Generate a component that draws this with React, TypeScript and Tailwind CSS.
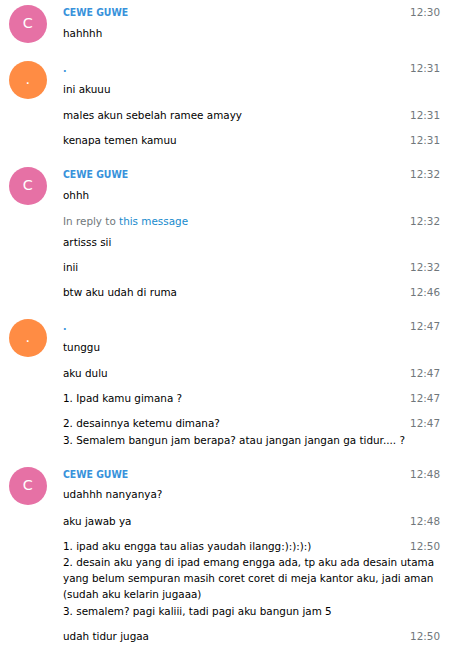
import React from 'react';

type Msg = { lines: string[]; time: string; reply?: boolean };
type Group = { name: string; initial: string; color: string; msgs: Msg[] };

const groups: Group[] = [
  {
    name: 'CEWE GUWE',
    initial: 'C',
    color: 'bg-[#e671a5]',
    msgs: [{ lines: ['hahhhh'], time: '12:30' }],
  },
  {
    name: '.',
    initial: '.',
    color: 'bg-[#ff8c44]',
    msgs: [
      { lines: ['ini akuuu'], time: '12:31' },
      { lines: ['males akun sebelah ramee amayy'], time: '12:31' },
      { lines: ['kenapa temen kamuu'], time: '12:31' },
    ],
  },
  {
    name: 'CEWE GUWE',
    initial: 'C',
    color: 'bg-[#e671a5]',
    msgs: [
      { lines: ['ohhh'], time: '12:32' },
      { lines: ['artisss sii'], time: '12:32', reply: true },
      { lines: ['inii'], time: '12:32' },
      { lines: ['btw aku udah di ruma'], time: '12:46' },
    ],
  },
  {
    name: '.',
    initial: '.',
    color: 'bg-[#ff8c44]',
    msgs: [
      { lines: ['tunggu'], time: '12:47' },
      { lines: ['aku dulu'], time: '12:47' },
      { lines: ['1. Ipad kamu gimana ?'], time: '12:47' },
      {
        lines: ['2. desainnya ketemu dimana?', '3. Semalem bangun jam berapa? atau jangan jangan ga tidur.... ?'],
        time: '12:47',
      },
    ],
  },
  {
    name: 'CEWE GUWE',
    initial: 'C',
    color: 'bg-[#e671a5]',
    msgs: [
      { lines: ['udahhh nanyanya?'], time: '12:48' },
      { lines: ['aku jawab ya'], time: '12:48' },
      {
        lines: [
          '1. ipad aku engga tau alias yaudah ilangg:):):):)',
          '2. desain aku yang di ipad emang engga ada, tp aku ada desain utama',
          'yang belum sempuran masih coret coret di meja kantor aku, jadi aman',
          '(sudah aku kelarin jugaaa)',
          '3. semalem? pagi kaliii, tadi pagi aku bangun jam 5',
        ],
        time: '12:50',
      },
      { lines: ['udah tidur jugaa'], time: '12:50' },
    ],
  },
];

const Message: React.FC<{ group: Group; msg: Msg; first: boolean }> = ({ group, msg, first }) => (
  <div className={`flex p-[9px] ${first ? '' : '-mt-[9px]'}`}>
    <div className="w-[54px] shrink-0">
      {first && (
        <div
          className={`size-[37.8px] rounded-full ${group.color} text-white text-center text-[14.4px] leading-[37.8px] select-none`}
        >
          {group.initial}
        </div>
      )}
    </div>
    <div className="flex-1 min-w-0 relative -top-[1px]">
      <div className="float-right pl-2 pr-[1px] text-[#70777b]">{msg.time}</div>
      {first && (
        <div className="font-bold text-[#3892db] pb-[4.5px] font-['DejaVu_Sans_Condensed',sans-serif]">
          {group.name}
        </div>
      )}
      {msg.reply && (
        <div className="pb-[4.5px] text-[#70777b]">
          In reply to <span className="text-[#168acd]">this message</span>
        </div>
      )}
      <div className="text-black">
        {msg.lines.map((l, i) => (
          <React.Fragment key={i}>
            {i > 0 && <br />}
            <span className="whitespace-nowrap">{l}</span>
          </React.Fragment>
        ))}
      </div>
    </div>
  </div>
);

export default function App() {
  return (
    <div className="w-[450px] h-[653px] overflow-hidden bg-white font-['DejaVu_Sans',sans-serif] text-[10.4px] leading-[16.2px]">
      <div className="-mt-[4px]">
        {groups.map((g, gi) => (
          <div key={gi}>
            {g.msgs.map((m, mi) => (
              <Message key={mi} group={g} msg={m} first={mi === 0} />
            ))}
          </div>
        ))}
      </div>
    </div>
  );
}
